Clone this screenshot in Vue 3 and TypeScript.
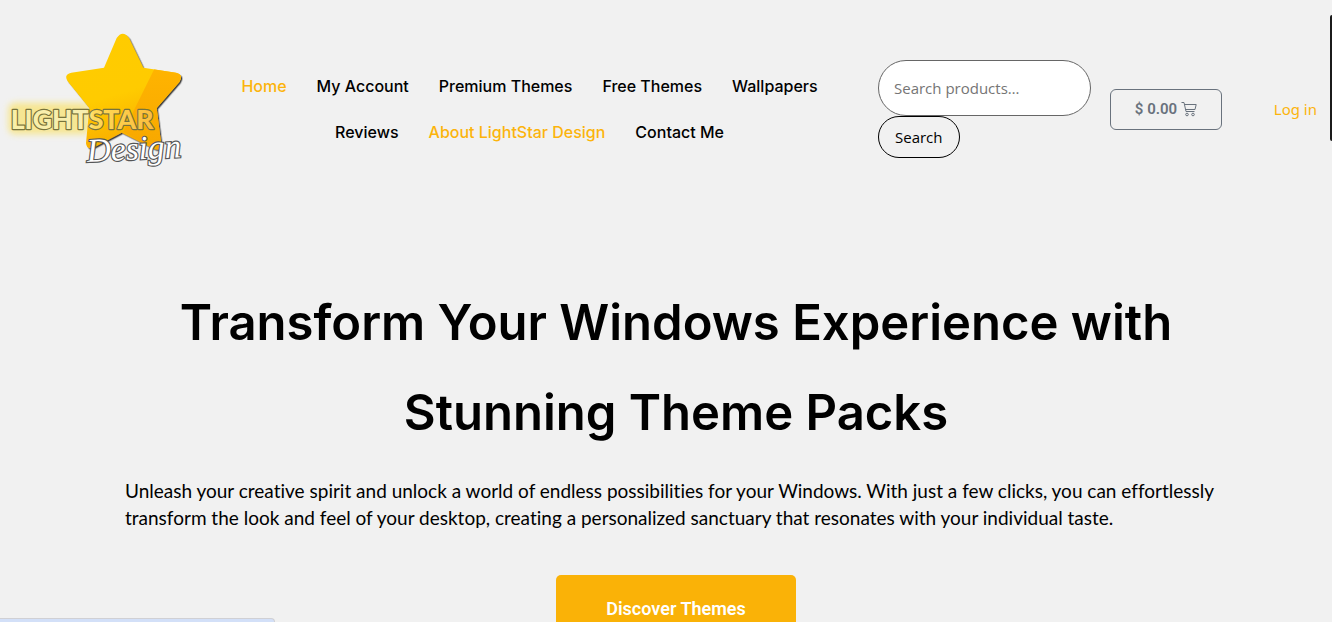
<script setup lang="ts">
import { ref } from 'vue'

interface NavItem {
  label: string
  active?: boolean
}

const navItems: NavItem[] = [
  { label: 'Home', active: true },
  { label: 'My Account' },
  { label: 'Premium Themes' },
  { label: 'Free Themes' },
  { label: 'Wallpapers' },
  { label: 'Reviews' },
  { label: 'About LightStar Design', active: true },
  { label: 'Contact Me' },
]

const query = ref('')
</script>

<template>
  <div class="page">
    <header class="header">
      <a class="brand" href="#" aria-label="LightStar Design">
        <svg class="logo" viewBox="0 0 600 510" aria-hidden="true">
          <defs>
            <linearGradient id="starFill" x1="0" y1="0" x2="0.3" y2="1">
              <stop offset="0" stop-color="#ffcc00" />
              <stop offset="0.6" stop-color="#ffcb00" />
              <stop offset="1" stop-color="#f9ad05" />
            </linearGradient>
            <linearGradient id="shadeFill" x1="0" y1="0" x2="0" y2="1">
              <stop offset="0" stop-color="#ffb400" />
              <stop offset="1" stop-color="#f7a700" />
            </linearGradient>
            <linearGradient id="wordFill" x1="0" y1="0" x2="1" y2="0">
              <stop offset="0" stop-color="#f8efa8" />
              <stop offset="0.52" stop-color="#f8eeb0" />
              <stop offset="0.58" stop-color="#ffda58" />
              <stop offset="1" stop-color="#fbbd3c" />
            </linearGradient>
            <filter id="soft" x="-20%" y="-60%" width="140%" height="220%">
              <feGaussianBlur stdDeviation="9" />
            </filter>
            <filter id="edge" x="-10%" y="-10%" width="120%" height="120%">
              <feDropShadow dx="4" dy="4" stdDeviation="2" flood-color="#222" flood-opacity="0.85" />
            </filter>
            <clipPath id="starClip">
              <path d="M350 54Q368 28 387 54L430 143L528 158Q552 164 538 186L470 264L484 374Q482 394 462 387L365 338L280 383Q260 390 258 370L268 264L203 184Q190 163 214 158L312 143Z" />
            </clipPath>
          </defs>
          <rect x="25" y="248" width="245" height="95" rx="20" fill="#f8e47b" filter="url(#soft)" opacity="0.8" />
          <g filter="url(#edge)">
            <path fill="url(#starFill)" d="M350 54Q368 28 387 54L430 143L528 158Q552 164 538 186L470 264L484 374Q482 394 462 387L365 338L280 383Q260 390 258 370L268 264L203 184Q190 163 214 158L312 143Z" />
          </g>
          <path clip-path="url(#starClip)" d="M464 145L370 335L490 400L560 140Z" fill="url(#shadeFill)" />
          <text class="logo-word" x="32" y="327" fill="url(#wordFill)">LIGHTSTAR</text>
          <text class="logo-script" x="262" y="426" transform="rotate(-3 262 426)">Design</text>
        </svg>
      </a>

      <nav class="nav" aria-label="Main">
        <a v-for="item in navItems" :key="item.label" href="#" :class="{ active: item.active }">{{ item.label }}</a>
      </nav>

      <form class="search" role="search" @submit.prevent>
        <input v-model="query" type="search" placeholder="Search products…" aria-label="Search products" />
        <button type="submit">Search</button>
      </form>

      <a class="cart" href="#" aria-label="Cart, $ 0.00">
        <span>$ 0.00</span>
        <svg viewBox="0 0 16 16" width="16" height="16" fill="none" stroke="currentColor" aria-hidden="true">
          <path d="M0.5 1.5H3L5 10.5H13.5M3.4 3.5H15.2L14 8.5H4.6" />
          <circle cx="6" cy="13.5" r="1.3" />
          <circle cx="12" cy="13.5" r="1.3" />
        </svg>
      </a>

      <a class="login" href="#">Log in</a>
    </header>

    <main class="hero">
      <h1>Transform Your Windows Experience with Stunning Theme Packs</h1>
      <p>
        Unleash your creative spirit and unlock a world of endless possibilities for your Windows. With just a few
        clicks, you can effortlessly transform the look and feel of your desktop, creating a personalized sanctuary that
        resonates with your individual taste.
      </p>
      <a class="cta" href="#">Discover Themes</a>
    </main>

    <div class="side-tab"></div>
    <div class="status-bubble"></div>
  </div>
</template>

<style>
html,
body {
  margin: 0;
  overflow: hidden;
  background: #f1f1f1;
}
</style>

<style scoped>
.page {
  height: 100vh;
  overflow: hidden;
  background: #f1f1f1;
  color: #000;
  font-family: Inter, 'Liberation Sans', sans-serif;
}

a {
  text-decoration: none;
}

.header {
  display: flex;
  align-items: center;
  min-height: 178px;
  padding: 20px 15px 20px 0;
}

.brand {
  flex: none;
  width: 200px;
  padding-bottom: 8px;
}

.logo {
  display: block;
  width: 200px;
  height: 170px;
}

.logo-word {
  font: 900 80px Lato, sans-serif;
  stroke: #77733c;
  stroke-width: 7px;
  stroke-linejoin: round;
  paint-order: stroke;
}

.logo-script {
  font: italic 400 100px 'Liberation Serif', serif;
  fill: #fff;
  stroke: #555;
  stroke-width: 7px;
  paint-order: stroke;
}

.nav {
  display: flex;
  flex: 1;
  flex-wrap: wrap;
  justify-content: center;
  margin: 0 39px 0 20px;
}

.nav a {
  padding: 13px 15px;
  color: #000;
  font-size: 16px;
  font-weight: 500;
  line-height: 20px;
}

.nav a.active {
  color: #fcb40c;
}

.search {
  display: flex;
  flex: none;
  flex-direction: column;
  align-items: flex-start;
  width: 213px;
  font-family: 'Open Sans', 'Noto Sans', sans-serif;
}

.search input {
  box-sizing: border-box;
  width: 100%;
  height: 56px;
  padding: 0 15px;
  border: 1px solid #666;
  border-radius: 28px;
  background: #fff;
  color: #000;
  font: inherit;
  font-size: 15px;
  appearance: none;
}

.search input::placeholder {
  color: #757575;
  opacity: 1;
}

.search button {
  height: 42px;
  padding: 0 16px;
  border: 1px solid #000;
  border-radius: 21px;
  background: transparent;
  color: #000;
  font: inherit;
  font-size: 15px;
}

.cart {
  display: flex;
  flex: none;
  align-items: center;
  justify-content: center;
  gap: 4px;
  box-sizing: border-box;
  width: 112px;
  height: 41px;
  margin-left: 19px;
  border: 1px solid #69727d;
  border-radius: 6px;
  color: #69727d;
  font: 600 15px Roboto, sans-serif;
}

.login {
  flex: none;
  width: 95px;
  color: #fcb40c;
  font: 15px 'Noto Sans', 'Open Sans', sans-serif;
  text-align: right;
}

.hero {
  display: flex;
  flex-direction: column;
  align-items: center;
  max-width: 1102px;
  margin: 0 auto;
  padding: 60px 0 0 20px;
}

.hero h1 {
  margin: 0;
  font-size: 49px;
  font-weight: 600;
  line-height: 90px;
  text-align: center;
}

.hero p {
  width: 100%;
  margin: 19px 0 44px;
  font-family: Lato, sans-serif;
  font-size: 19px;
  font-variant-ligatures: none;
  line-height: 27px;
}

.cta {
  box-sizing: border-box;
  min-width: 240px;
  padding: 24px 40px;
  border-radius: 5px;
  background: #fab207;
  color: #fff;
  font: 600 18px/20px Roboto, sans-serif;
  text-align: center;
}

.side-tab {
  position: fixed;
  top: 15px;
  right: 0;
  width: 2px;
  height: 126px;
  border-radius: 3px 0 0 3px;
  background: #1b1b1b;
}

.status-bubble {
  position: fixed;
  bottom: 0;
  left: 0;
  box-sizing: border-box;
  width: 275px;
  height: 4px;
  border-top: 1px solid #d0d0d4;
  border-right: 1px solid #d0d0d4;
  border-radius: 0 4px 0 0;
  background: #d3e0f8;
}
</style>
